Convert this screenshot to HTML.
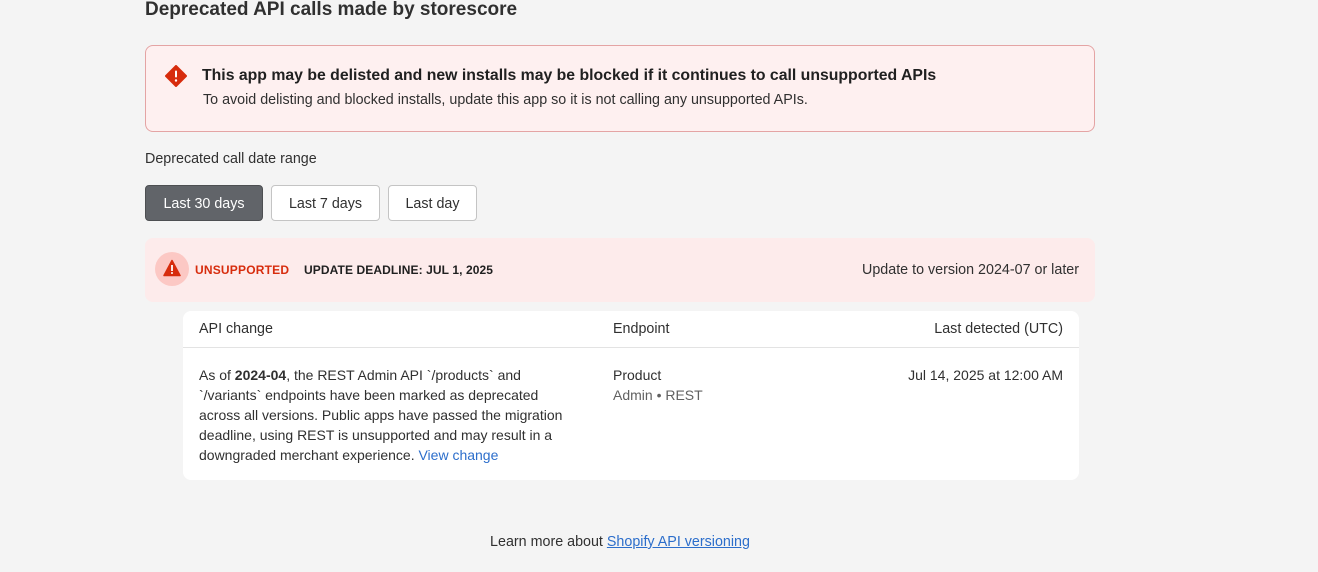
<!DOCTYPE html>
<html><head><meta charset="utf-8"><style>
*{box-sizing:border-box;margin:0;padding:0}
body{width:1318px;height:572px;background:#f4f4f4;font-family:"Liberation Sans",sans-serif;color:#303030;font-size:14.3px;position:relative;overflow:hidden}
.abs{position:absolute}
h1{position:absolute;left:145px;top:-1px;font-size:19px;font-weight:bold;color:#303030}
.banner{left:145px;top:45px;width:950px;height:87px;background:#fef0f0;border:1px solid #e4a4a4;border-radius:8px}
.btn{top:185px;height:36px;border:1px solid #c4c4c4;border-radius:4px;background:#fff;font-size:14.3px;display:flex;align-items:center;justify-content:center;color:#303030;padding-top:2px}
.row{left:145px;top:238px;width:950px;height:64px;background:#fdebeb;border-radius:8px}
.card{left:183px;top:311px;width:896px;height:169px;background:#fff;border-radius:8px}
a{color:#2c6ecb;text-decoration:underline}
</style></head><body>
<h1>Deprecated API calls made by storescore</h1>
<div class="abs banner">
<svg class="abs" style="left:19px;top:19px" width="22" height="22" viewBox="0 0 22 22"><path d="M11 1L21 11L11 21L1 11Z" fill="#d72c0d" stroke="#d72c0d" stroke-linejoin="round" stroke-width="2"/><rect x="10" y="5.5" width="2" height="7" rx="1" fill="#fff"/><circle cx="11" cy="15.5" r="1.2" fill="#fff"/></svg>
<div class="abs" style="left:56px;top:21px;font-size:15.8px;font-weight:bold;color:#202020">This app may be delisted and new installs may be blocked if it continues to call unsupported APIs</div>
<div class="abs" style="left:57px;top:46px">To avoid delisting and blocked installs, update this app so it is not calling any unsupported APIs.</div>
</div>
<div class="abs" style="left:145px;top:151px">Deprecated call date range</div>
<div class="abs btn" style="left:145px;width:118px;background:#616469;border-color:#4d4f52;color:#fff">Last 30 days</div>
<div class="abs btn" style="left:271px;width:109px">Last 7 days</div>
<div class="abs btn" style="left:388px;width:89px">Last day</div>
<div class="abs row">
<div class="abs" style="left:10px;top:14px;width:34px;height:34px;border-radius:50%;background:#fcc8c4"></div>
<svg class="abs" style="left:18px;top:21px" width="18" height="18" viewBox="0 0 18 18"><path d="M9 1.5L17 16.5H1Z" fill="#d72c0d" stroke="#d72c0d" stroke-linejoin="round" stroke-width="1.5"/><rect x="8.1" y="6" width="1.8" height="6" fill="#fff"/><circle cx="9" cy="14" r="1" fill="#fff"/></svg>
<div class="abs" style="left:50px;top:25px;font-size:12px;font-weight:bold;color:#d72c0d;letter-spacing:.2px">UNSUPPORTED</div>
<div class="abs" style="left:159px;top:25px;font-size:12px;font-weight:bold;color:#202020;letter-spacing:.1px">UPDATE DEADLINE: JUL 1, 2025</div>
<div class="abs" style="right:16px;top:24px">Update to version 2024-07 or later</div>
</div>
<div class="abs card">
<div class="abs" style="left:16px;top:10px">API change</div>
<div class="abs" style="left:430px;top:10px">Endpoint</div>
<div class="abs" style="right:16px;top:10px">Last detected (UTC)</div>
<div class="abs" style="left:0;top:36px;width:896px;height:1px;background:#e3e3e3"></div>
<div class="abs" style="left:16px;top:54px;width:380px;line-height:20px;font-size:14px">As of <b>2024-04</b>, the REST Admin API `/products` and `/variants` endpoints have been marked as deprecated across all versions. Public apps have passed the migration deadline, using REST is unsupported and may result in a downgraded merchant experience. <span style="color:#2c6ecb">View change</span></div>
<div class="abs" style="left:430px;top:54px;line-height:20px;font-size:14px">Product<br><span style="color:#616161">Admin • REST</span></div>
<div class="abs" style="right:16px;top:54px;line-height:20px;font-size:14px">Jul 14, 2025 at 12:00 AM</div>
</div>
<div class="abs" style="left:0;width:1240px;top:534px;text-align:center">Learn more about <a>Shopify API versioning</a></div>
</body></html>
